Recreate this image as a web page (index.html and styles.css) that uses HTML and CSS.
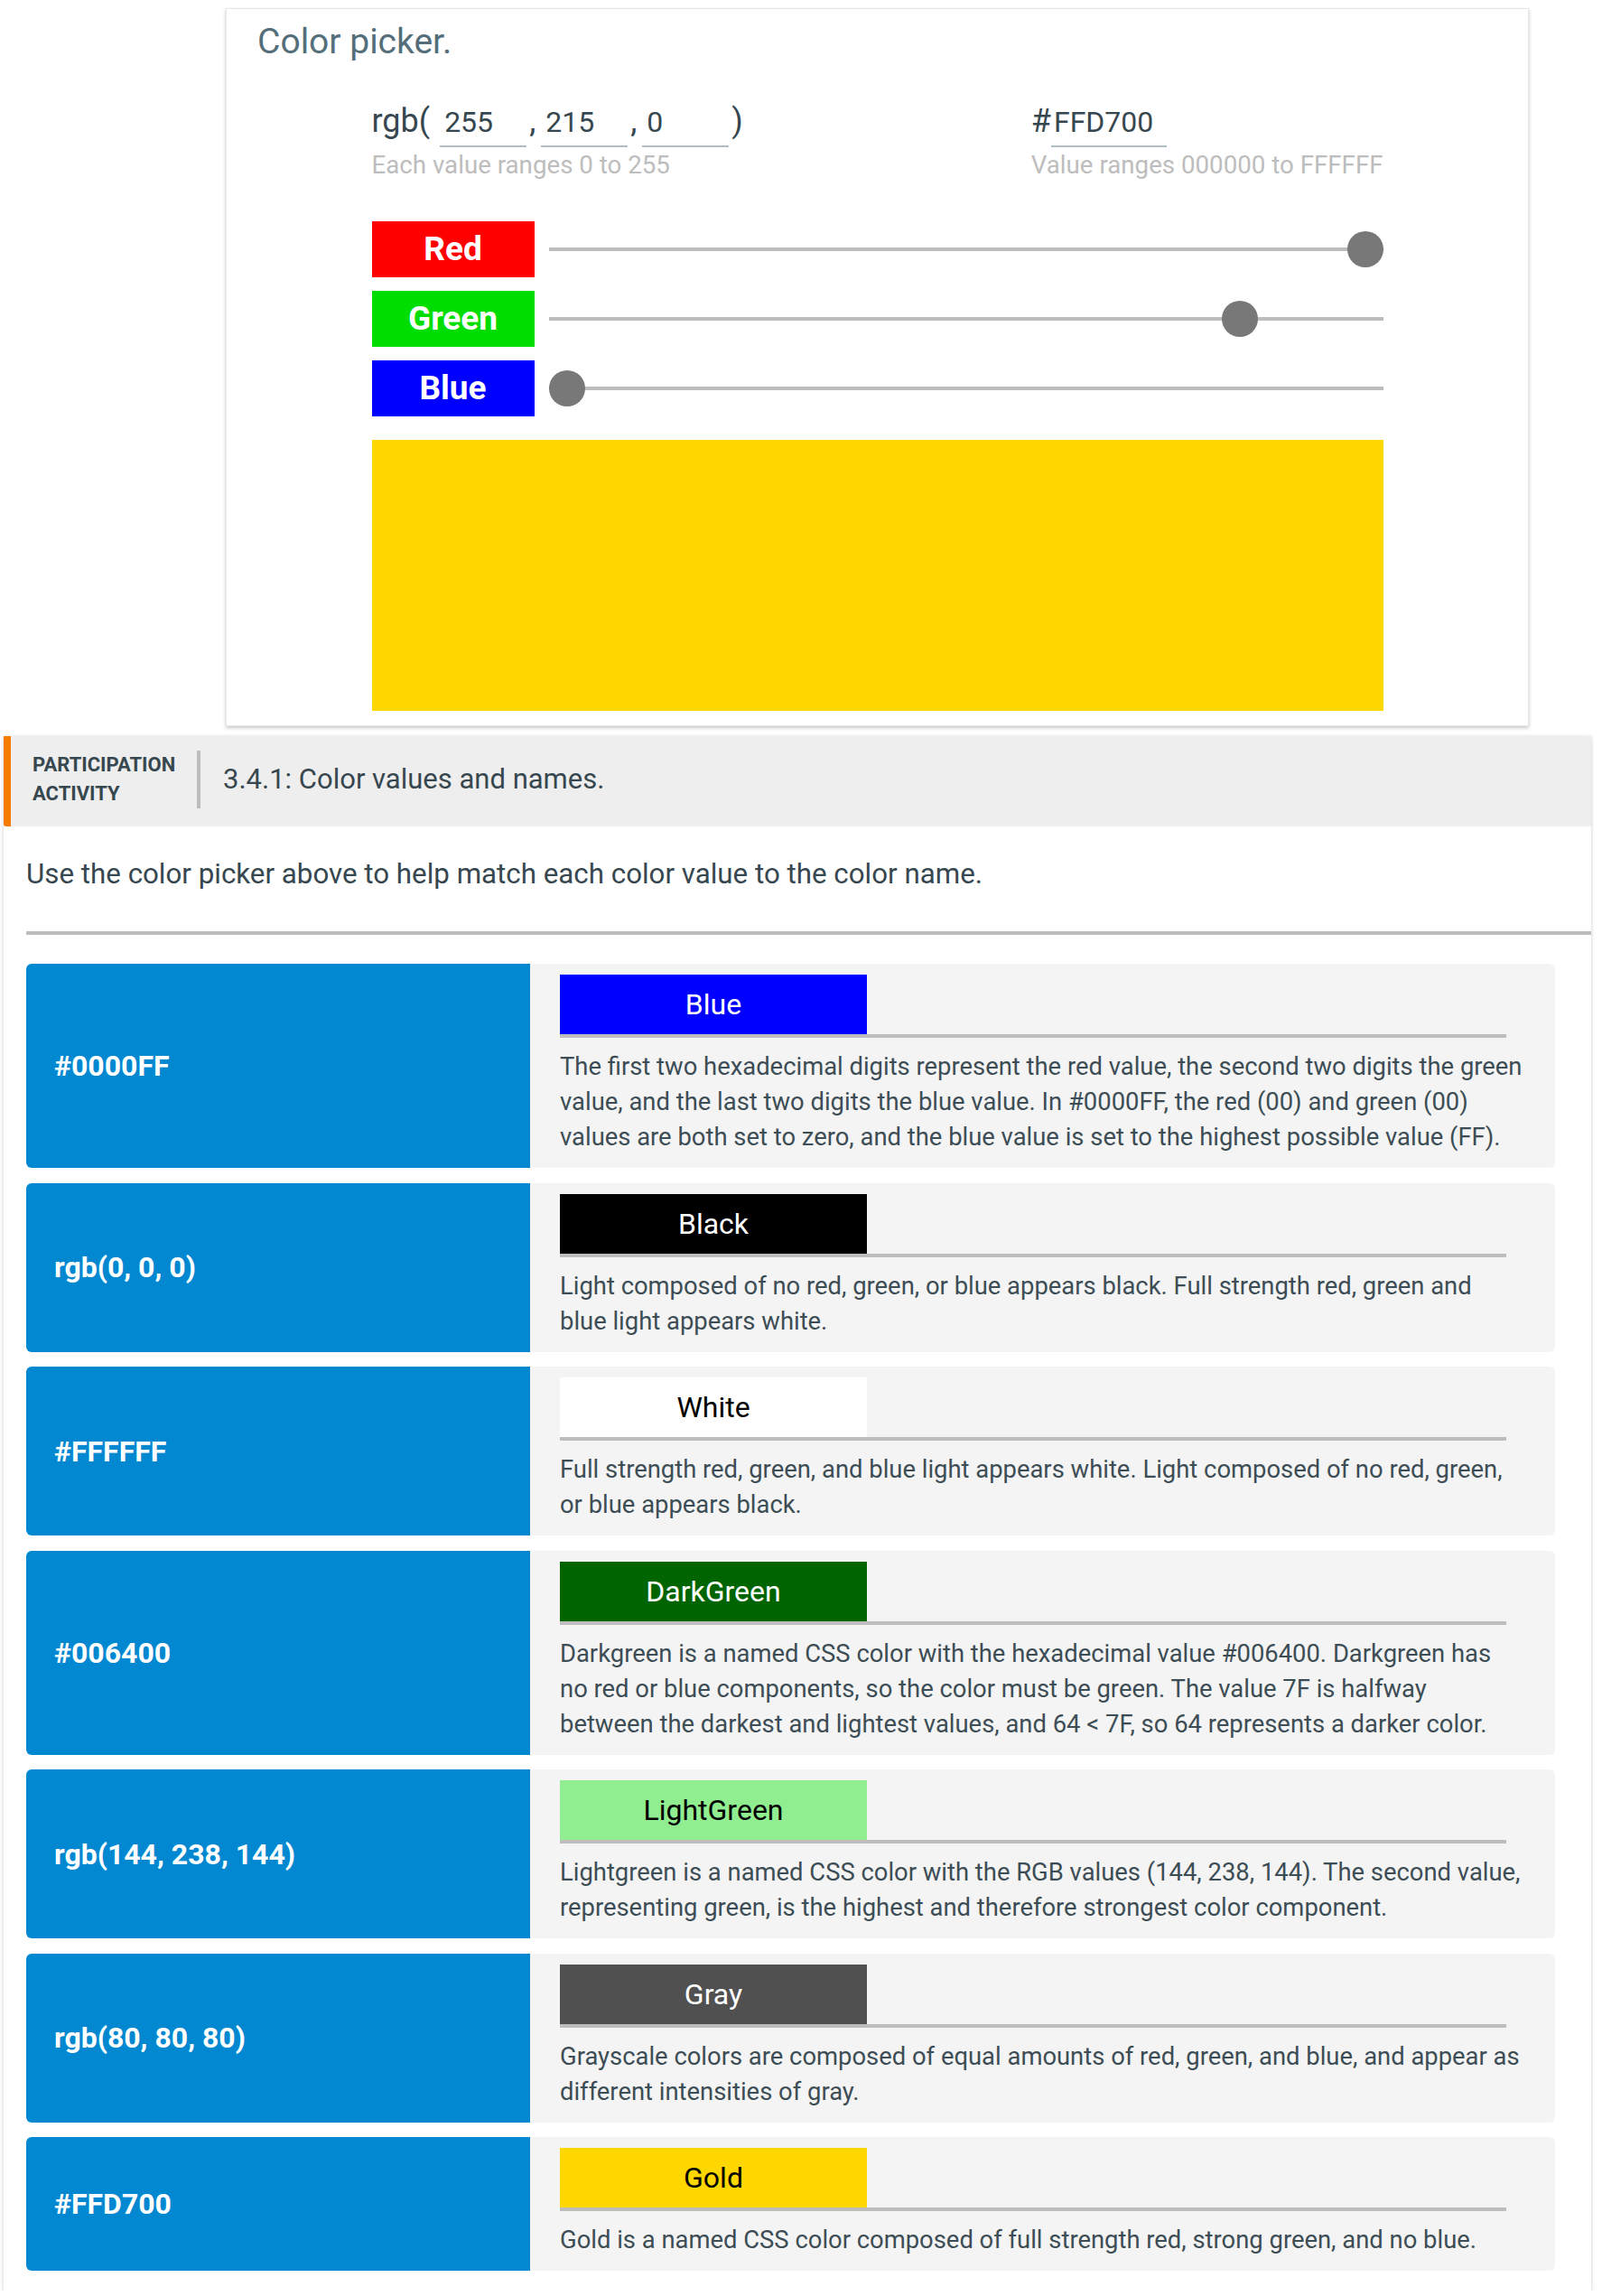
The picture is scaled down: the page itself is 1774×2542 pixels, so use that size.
FILE: index.html
```html
<!DOCTYPE html>
<html lang="en">
<head>
<meta charset="utf-8">
<title>Color values and names</title>
<link rel="stylesheet" href="styles.css">
</head>
<body>
<section class="picker">
  <h2 class="picker-title">Color picker.</h2>
  <div class="picker-body">
    <div class="values">
      <div class="value-group">
        <div class="value-row">
          <span class="lit lit-rgb">rgb(</span>
          <span class="field field-num">255</span>
          <span class="lit lit-sep">,</span>
          <span class="field field-num">215</span>
          <span class="lit lit-sep">,</span>
          <span class="field field-num">0</span>
          <span class="lit lit-close">)</span>
        </div>
        <div class="hint">Each value ranges 0 to 255</div>
      </div>
      <div class="value-group">
        <div class="value-row">
          <span class="lit">#</span>
          <span class="field field-hex">FFD700</span>
        </div>
        <div class="hint">Value ranges 000000 to FFFFFF</div>
      </div>
    </div>
    <div class="sliders">
      <div class="slider">
        <div class="chan chan-red">Red</div>
        <div class="track"><span class="thumb" style="left: calc((100% - 40px) * 1)"></span></div>
      </div>
      <div class="slider">
        <div class="chan chan-green">Green</div>
        <div class="track"><span class="thumb" style="left: calc((100% - 40px) * 0.8431)"></span></div>
      </div>
      <div class="slider">
        <div class="chan chan-blue">Blue</div>
        <div class="track"><span class="thumb" style="left: calc((100% - 40px) * 0)"></span></div>
      </div>
    </div>
    <div class="swatch"></div>
  </div>
</section>

<section class="activity">
  <header class="activity-head">
    <div class="activity-kind"><span>PARTICIPATION</span><span>ACTIVITY</span></div>
    <div class="activity-title">3.4.1: Color values and names.</div>
  </header>
  <div class="activity-body">
    <p class="instructions">Use the color picker above to help match each color value to the color name.</p>
    <div class="rule"></div>
    <div class="matches">
      <div class="match">
        <div class="match-term">#0000FF</div>
        <div class="match-answer">
          <div class="drop"><div class="chip chip-blue">Blue</div></div>
          <p class="explain">The first two hexadecimal digits represent the red value, the second two digits the green<br>value, and the last two digits the blue value. In #0000FF, the red (00) and green (00)<br>values are both set to zero, and the blue value is set to the highest possible value (FF).</p>
        </div>
      </div>
      <div class="match">
        <div class="match-term">rgb(0, 0, 0)</div>
        <div class="match-answer">
          <div class="drop"><div class="chip chip-black">Black</div></div>
          <p class="explain">Light composed of no red, green, or blue appears black. Full strength red, green and<br>blue light appears white.</p>
        </div>
      </div>
      <div class="match">
        <div class="match-term">#FFFFFF</div>
        <div class="match-answer">
          <div class="drop"><div class="chip chip-white">White</div></div>
          <p class="explain">Full strength red, green, and blue light appears white. Light composed of no red, green,<br>or blue appears black.</p>
        </div>
      </div>
      <div class="match">
        <div class="match-term">#006400</div>
        <div class="match-answer">
          <div class="drop"><div class="chip chip-darkgreen">DarkGreen</div></div>
          <p class="explain">Darkgreen is a named CSS color with the hexadecimal value #006400. Darkgreen has<br>no red or blue components, so the color must be green. The value 7F is halfway<br>between the darkest and lightest values, and 64 &lt; 7F, so 64 represents a darker color.</p>
        </div>
      </div>
      <div class="match">
        <div class="match-term">rgb(144, 238, 144)</div>
        <div class="match-answer">
          <div class="drop"><div class="chip chip-lightgreen">LightGreen</div></div>
          <p class="explain">Lightgreen is a named CSS color with the RGB values (144, 238, 144). The second value,<br>representing green, is the highest and therefore strongest color component.</p>
        </div>
      </div>
      <div class="match">
        <div class="match-term">rgb(80, 80, 80)</div>
        <div class="match-answer">
          <div class="drop"><div class="chip chip-gray">Gray</div></div>
          <p class="explain">Grayscale colors are composed of equal amounts of red, green, and blue, and appear as<br>different intensities of gray.</p>
        </div>
      </div>
      <div class="match">
        <div class="match-term">#FFD700</div>
        <div class="match-answer">
          <div class="drop"><div class="chip chip-gold">Gold</div></div>
          <p class="explain">Gold is a named CSS color composed of full strength red, strong green, and no blue.</p>
        </div>
      </div>
    </div>
  </div>
</section>
</body>
</html>
```

FILE: styles.css
```css
* {
  box-sizing: border-box;
}

html, body {
  margin: 0;
  padding: 0;
  background: #ffffff;
}

body {
  font-family: Roboto, "Liberation Sans", Arial, sans-serif;
  color: #37474f;
  padding-top: 9px;
}

/* ---------- Color picker card ---------- */
.picker {
  margin-left: 250px;
  width: 1443px;
  border: 1px solid #e6e6e6;
  background: #ffffff;
  box-shadow: 0 2px 4px rgba(0, 0, 0, 0.22);
  padding: 14px 0 16px 0;
}

.picker-title {
  margin: 0 0 0 34px;
  font-size: 39px;
  line-height: 44px;
  font-weight: 400;
  color: #546e7a;
}

.picker-body {
  width: 1120px;
  margin: 44px auto 0 auto;
}

.values {
  display: flex;
  justify-content: space-between;
  align-items: flex-start;
}

.value-group {
  display: flex;
  flex-direction: column;
}

.value-row {
  display: flex;
  align-items: baseline;
  color: #37474f;
}

.lit {
  font-size: 36px;
  line-height: 44px;
}

.lit-rgb {
  margin-right: 11px;
}

.lit-sep {
  margin: 0 6px 0 3px;
}

.lit-close {
  margin-left: 3px;
}

.field {
  font-size: 32px;
  line-height: 40px;
  padding: 0 4px 6px 5px;
  border-bottom: 2px solid #b0bec5;
  color: #37474f;
}

.field-num {
  width: 96px;
}

.field-hex {
  width: 128px;
  padding-left: 3px;
}

.hint {
  margin-top: 4px;
  font-size: 27.7px;
  line-height: 32px;
  color: #bdbdbd;
}

.sliders {
  margin-top: 46px;
  display: flex;
  flex-direction: column;
  gap: 15px;
}

.slider {
  display: flex;
  align-items: center;
  gap: 16px;
}

.chan {
  width: 180px;
  height: 62px;
  line-height: 62px;
  text-align: center;
  color: #ffffff;
  font-weight: 700;
  font-size: 37px;
}

.chan-red { background: #ff0000; }
.chan-green { background: #00dd00; }
.chan-blue { background: #0000ff; }

.track {
  flex: 1;
  height: 40px;
  position: relative;
  display: flex;
  align-items: center;
}

.track::before {
  content: "";
  display: block;
  width: 100%;
  height: 4px;
  background: #bdbdbd;
}

.thumb {
  position: absolute;
  top: 0;
  width: 40px;
  height: 40px;
  border-radius: 50%;
  background: #787878;
}

.swatch {
  margin-top: 26px;
  height: 300px;
  background: #ffd700;
}

/* ---------- Participation activity ---------- */
.activity {
  margin: 11px 0 0 4px;
  width: 1758px;
  background: #ffffff;
  box-shadow: 0 1px 4px rgba(0, 0, 0, 0.22);
  padding-bottom: 22px;
}

.activity-head {
  height: 100px;
  background: #eeeeee;
  border-left: 8px solid #f57c00;
  border-bottom-left-radius: 3px;
  padding: 0 0 4px 24px;
  display: flex;
  align-items: center;
}

.activity-kind {
  width: 182px;
  display: flex;
  flex-direction: column;
  font-weight: 700;
  font-size: 22px;
  line-height: 32px;
  color: #37474f;
}

.activity-title {
  height: 64px;
  border-left: 4px solid #bdbdbd;
  padding-left: 25px;
  display: flex;
  align-items: center;
  font-size: 31px;
  line-height: 40px;
  color: #37474f;
}

.activity-body {
  padding-left: 25px;
}

.instructions {
  margin: 29px 0 0 0;
  font-size: 31.3px;
  line-height: 48px;
  color: #37474f;
}

.rule {
  margin-top: 39px;
  height: 4px;
  background: #bdbdbd;
}

.matches {
  margin: 32px 40px 0 0;
  display: flex;
  flex-direction: column;
  gap: 16.5px;
}

.match {
  display: flex;
}

.match-term {
  width: 558px;
  flex: none;
  background: #0288d1;
  border-radius: 6px 0 0 6px;
  padding-left: 31px;
  display: flex;
  align-items: center;
  color: #ffffff;
  font-weight: 700;
  font-size: 32px;
}

.match-answer {
  flex: 1;
  background: #f4f4f4;
  border-radius: 0 6px 6px 0;
  padding: 12px 20px 14px 33px;
}

.drop {
  width: 1048px;
  border-bottom: 4px solid #bdbdbd;
}

.chip {
  width: 340px;
  height: 66px;
  line-height: 66px;
  text-align: center;
  font-size: 32px;
}

.chip-blue { background: #0000ff; color: #ffffff; }
.chip-black { background: #000000; color: #ffffff; }
.chip-white { background: #ffffff; color: #000000; }
.chip-darkgreen { background: #006400; color: #ffffff; }
.chip-lightgreen { background: #90ee90; color: #000000; }
.chip-gray { background: #505050; color: #ffffff; }
.chip-gold { background: #ffd700; color: #000000; }

.explain {
  margin: 13px 0 0 0;
  font-size: 27.4px;
  line-height: 39px;
  color: #3d4d55;
}
```
